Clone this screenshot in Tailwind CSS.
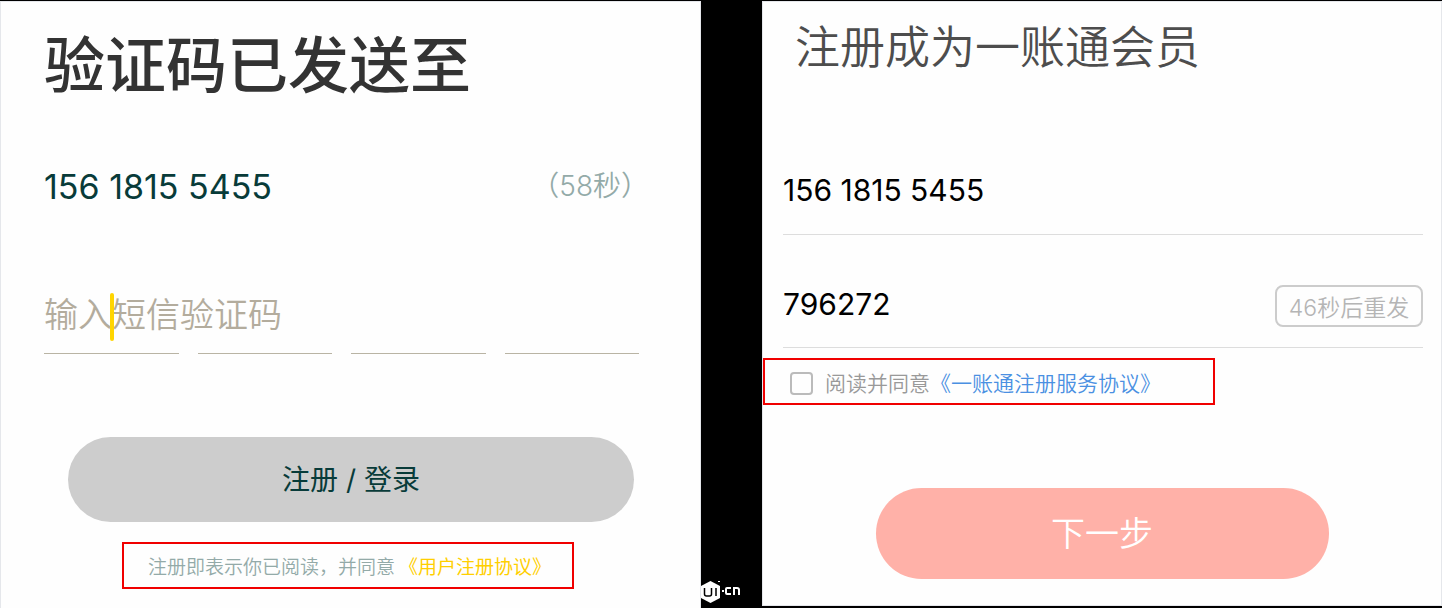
<!DOCTYPE html>
<html lang="zh-CN">
  <head>
    <meta charset="UTF-8" />
    <meta name="viewport" content="width=device-width, initial-scale=1.0" />
    <title>注册协议</title>
    <script src="https://cdn.jsdelivr.net/npm/@tailwindcss/browser@4"></script>
  </head>
  <body class="bg-black font-['Inter','Noto_Sans_CJK_SC',sans-serif]">
    <div class="grid grid-cols-[701fr_61fr_680fr] min-h-screen pt-px">
      <!-- 短信验证码 -->
      <form class="bg-[#fefefe] border border-b-0 border-gray-200 pl-[43px] pr-[61px] pt-8">
        <h1 class="text-[61px] leading-[64px] font-medium text-[#333333] whitespace-nowrap">验证码已发送至</h1>
        <div class="flex items-center justify-between mt-[68px] h-10">
          <p class="text-[34px] text-[#083b39]">156 1815 5455</p>
          <span class="-mr-2.5 text-[28px] font-[350] text-[#93aaa8] whitespace-nowrap">（58秒）</span>
        </div>
        <div class="relative mt-[83px]">
          <input type="text" aria-label="短信验证码" placeholder="输入短信验证码" class="block w-full h-[50px] text-[34px] font-[350] outline-none placeholder:text-[#b3ac9d]" />
          <span class="absolute left-[66px] top-1 w-1 h-12 rounded-full bg-[#ffd500]"></span>
        </div>
        <div class="grid grid-cols-4 gap-[19px] mt-[14px]">
          <span class="h-px bg-[#b9b4a4]"></span>
          <span class="h-px bg-[#b9b4a4]"></span>
          <span class="h-px bg-[#b9b4a4]"></span>
          <span class="h-px bg-[#b9b4a4]"></span>
        </div>
        <button type="button" class="block w-[566px] h-[85px] ml-6 mt-[83px] rounded-full bg-[#cdcdcd] text-[28px] text-[#083b39]">注册&nbsp;/&nbsp;登录</button>
        <p class="flex items-center w-[452px] h-[47px] ml-[78px] mt-5 pl-6 pt-1.5 border-2 border-[#f00000] text-[19px] font-[350] text-[#93aaa8] whitespace-nowrap">注册即表示你已阅读，并同意<a href="#" class="ml-1 font-normal text-[#ffcf00]">《用户注册协议》</a></p>
      </form>

      <div class="flex items-end pb-[5px]">
        <svg class="w-10 h-[22px]" viewBox="0 0 40 22" fill="none" role="img" aria-label="UI.cn">
          <path d="M9.500 0 19 5v12l-9.500 5L0 17V5Z" fill="#fff" />
          <path d="M3.500 7v6q0 2 2 2h3q2 0 2-2V7M15 7v8" stroke="#000" stroke-width="1.500" />
          <path d="M17 0h2v1h-2ZM21 9h2v2h-2Z" fill="#fff" />
          <path d="M30 7h-4q-1 0-1 1v4q0 1 1 1h4M33 14V7h3q2 0 2 2v5" stroke="#fff" stroke-width="2" />
        </svg>
      </div>

      <!-- 一账通注册 -->
      <form class="bg-[#fefefe] border border-gray-200 mb-[2px] pt-[22px]">
        <h2 class="pl-8 text-[45px] leading-[48px] font-[350] text-[#4d4d4d] whitespace-nowrap">注册成为一账通会员</h2>
        <div class="ml-5 mr-[18px]">
          <input type="tel" aria-label="手机号" value="156 1815 5455" class="block w-full h-[88px] mt-[75px] pb-0.5 text-[30px] text-black border-b border-[#dddddd] outline-none" />
          <div class="flex items-center justify-between h-[113px] pt-[29px] border-b border-[#dddddd]">
            <input type="text" aria-label="验证码" value="796272" class="min-w-0 flex-1 h-10 pb-0.5 text-[30px] text-black outline-none" />
            <button type="button" class="w-[148px] h-[42px] pt-1 rounded-lg border-2 border-[#cccccc] text-[23px] leading-8 font-[350] text-[#b5b5b5] whitespace-nowrap">46秒后重发</button>
          </div>
        </div>
        <div class="flex items-center w-[452px] h-[47px] mt-[10px] pl-[25px] pt-1 border-2 border-[#f00000] text-[21px] font-[350] text-[#999999] whitespace-nowrap">
          <input id="agree" type="checkbox" class="appearance-none size-[23px] mr-3 rounded-sm border-2 border-[#bbbbbb]" />
          <label for="agree">阅读并同意</label><a href="#" class="text-[#4a90e2]">《一账通注册服务协议》</a>
        </div>
        <button type="button" class="block w-[453px] h-[91px] mx-auto mt-[83px] rounded-full bg-[#ffb1a8] text-[34px] font-[350] text-white">下一步</button>
      </form>
    </div>
  </body>
</html>
